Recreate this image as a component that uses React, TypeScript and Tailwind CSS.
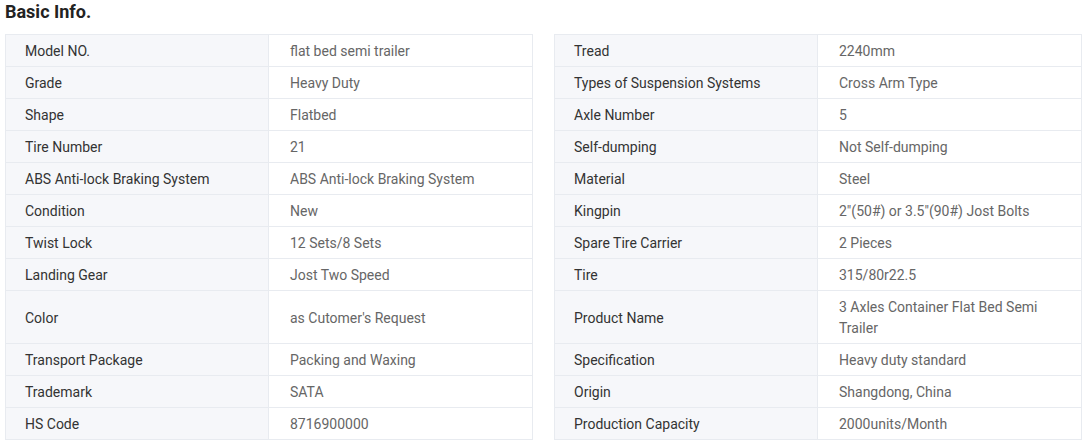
import React from "react";

type Row = [string, string];

const left: Row[] = [
  ["Model NO.", "flat bed semi trailer"],
  ["Grade", "Heavy Duty"],
  ["Shape", "Flatbed"],
  ["Tire Number", "21"],
  ["ABS Anti-lock Braking System", "ABS Anti-lock Braking System"],
  ["Condition", "New"],
  ["Twist Lock", "12 Sets/8 Sets"],
  ["Landing Gear", "Jost Two Speed"],
  ["Color", "as Cutomer's Request"],
  ["Transport Package", "Packing and Waxing"],
  ["Trademark", "SATA"],
  ["HS Code", "8716900000"],
];

const right: Row[] = [
  ["Tread", "2240mm"],
  ["Types of Suspension Systems", "Cross Arm Type"],
  ["Axle Number", "5"],
  ["Self-dumping", "Not Self-dumping"],
  ["Material", "Steel"],
  ["Kingpin", "2\"(50#) or 3.5\"(90#) Jost Bolts"],
  ["Spare Tire Carrier", "2 Pieces"],
  ["Tire", "315/80r22.5"],
  ["Product Name", "3 Axles Container Flat Bed Semi Trailer"],
  ["Specification", "Heavy duty standard"],
  ["Origin", "Shangdong, China"],
  ["Production Capacity", "2000units/Month"],
];

function Half({ row, first }: { row: Row; first: boolean }) {
  return (
    <div
      className={`grid grid-cols-2 border-x border-b border-[#e8ebf0] ${first ? "border-t" : ""}`}
    >
      <div className="flex items-center border-r border-[#e8ebf0] bg-[#f6f7fa] pt-[6px] pb-[4px] pl-[19px] pr-5 text-[#333]">
        {row[0]}
      </div>
      <div className="flex items-center pt-[6px] pb-[4px] pl-[21px] pr-5 text-[#666]">{row[1]}</div>
    </div>
  );
}

export default function App() {
  return (
    <div className="min-h-screen bg-white px-[5px] font-['Roboto','Liberation_Sans',sans-serif]">
      <h2 className="mb-[10px] text-[18px] font-bold leading-6 text-[#222]">Basic Info.</h2>
      <div className="text-[14px] leading-[21px]">
        {left.map((row, i) => (
          <div key={row[0]} className="grid grid-cols-2 gap-x-[21px]">
            <Half row={row} first={i === 0} />
            <Half row={right[i]} first={i === 0} />
          </div>
        ))}
      </div>
    </div>
  );
}
